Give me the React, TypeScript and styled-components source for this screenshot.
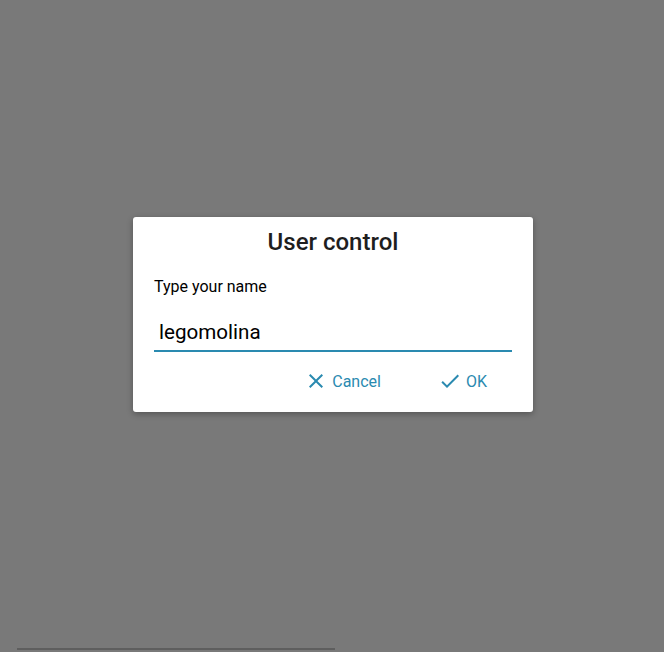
import React from "react";
import styled, { createGlobalStyle } from "styled-components";

const Global = createGlobalStyle`
  html, body { margin: 0; padding: 0; height: 100%; }
  body { background: #797979; font-family: Roboto, "Noto Sans", sans-serif; overflow: hidden; }
  #root { height: 100%; }
`;

const Backdrop = styled.div`
  height: 652px;
  display: flex;
  justify-content: center;
  align-items: flex-start;
  padding-top: 217px;
  padding-left: 2px;
  box-sizing: border-box;
  position: relative;
`;

const BottomBar = styled.div`
  position: absolute;
  left: 17px;
  bottom: 2px;
  width: 318px;
  height: 2px;
  background: #5e5e5e;
`;

const Dialog = styled.div`
  width: 400px;
  height: 195px;
  background: #ffffff;
  border-radius: 3px;
  box-shadow: 0 2px 6px rgba(0, 0, 0, 0.3);
  display: flex;
  flex-direction: column;
  box-sizing: border-box;
`;

const Title = styled.h2`
  margin: 0;
  padding-top: 11px;
  height: 50px;
  box-sizing: border-box;
  text-align: center;
  font-size: 24px;
  font-weight: 500;
  color: #1e1e1e;
  line-height: 28px;
`;

const Content = styled.div`
  padding: 10px 21px 0 21px;
  display: flex;
  flex-direction: column;
`;

const Label = styled.label`
  font-size: 16px;
  color: #000000;
  line-height: 20px;
`;

const Input = styled.input`
  margin-top: 23px;
  border: none;
  border-bottom: 2px solid #2a8ab0;
  outline: none;
  padding: 0 5px 5px 5px;
  font-family: Roboto, "Noto Sans", sans-serif;
  font-size: 20.6px;
  line-height: 25px;
  color: #000000;
  background: transparent;
  width: 100%;
  box-sizing: border-box;
`;

const Actions = styled.div`
  display: flex;
  justify-content: flex-end;
  gap: 57px;
  padding: 17px 46px 0 0;
`;

const Button = styled.button`
  display: flex;
  align-items: center;
  gap: 6px;
  border: none;
  background: none;
  padding: 0;
  font-family: Roboto, "Noto Sans", sans-serif;
  font-size: 16px;
  color: #2a8ab0;
  cursor: pointer;
`;

const Icon = styled.svg`
  width: 24px;
  height: 24px;
  fill: #2a8ab0;
  margin-right: -2px;
`;

export default function App() {
  return (
    <>
      <Global />
      <Backdrop>
        <Dialog>
          <Title>User control</Title>
          <Content>
            <Label>Type your name</Label>
            <Input defaultValue="legomolina" />
          </Content>
          <Actions>
            <Button>
              <Icon viewBox="0 0 24 24">
                <path d="M19 6.41L17.59 5 12 10.59 6.41 5 5 6.41 10.59 12 5 17.59 6.41 19 12 13.41 17.59 19 19 17.59 13.41 12z" />
              </Icon>
              Cancel
            </Button>
            <Button>
              <Icon viewBox="0 0 24 24">
                <path d="M9 16.17L4.83 12l-1.42 1.41L9 19 21 7l-1.41-1.41z" />
              </Icon>
              OK
            </Button>
          </Actions>
        </Dialog>
        <BottomBar />
      </Backdrop>
    </>
  );
}
